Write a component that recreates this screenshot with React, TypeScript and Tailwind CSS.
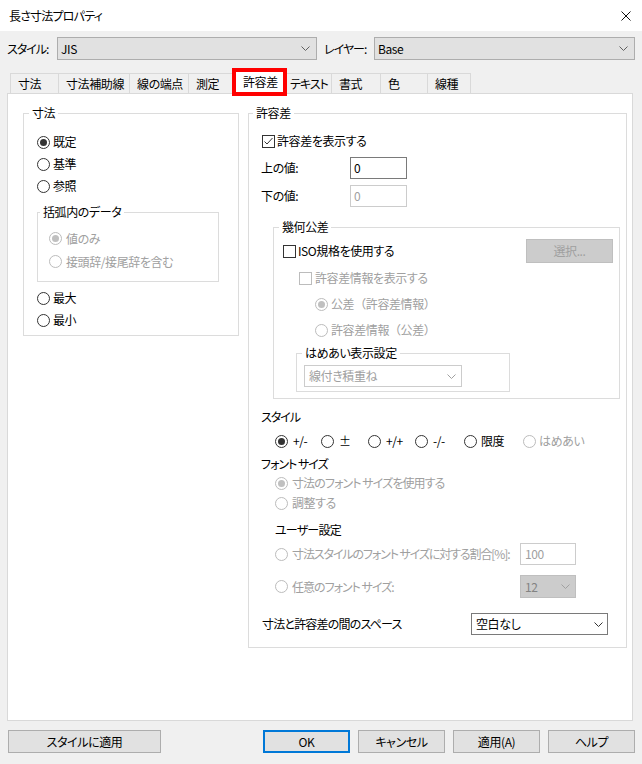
import React from "react";

const Chevron = ({ color = "#606060" }: { color?: string }) => (
  <svg width="9" height="5" viewBox="0 0 9 5" className="shrink-0">
    <polyline points="0.5,0.5 4.5,4.5 8.5,0.5" fill="none" stroke={color} strokeWidth="1" />
  </svg>
);

function Radio({ checked, disabled }: { checked?: boolean; disabled?: boolean }) {
  return (
    <span
      className={`w-[13px] h-[13px] rounded-full border bg-white flex items-center justify-center shrink-0 ${
        disabled ? "border-[#bcbcbc]" : "border-[#333333]"
      }`}
    >
      {checked && (
        <span className={`w-[7px] h-[7px] rounded-full ${disabled ? "bg-[#c0c0c0]" : "bg-[#333333]"}`} />
      )}
    </span>
  );
}

function Check({ checked, disabled }: { checked?: boolean; disabled?: boolean }) {
  return (
    <span
      className={`w-[13px] h-[13px] border bg-white flex items-center justify-center shrink-0 ${
        disabled ? "border-[#bcbcbc]" : "border-[#333333]"
      }`}
    >
      {checked && (
        <svg width="11" height="11" viewBox="0 0 11 11">
          <polyline points="1.5,5.5 4,8 9.5,2" fill="none" stroke="#333333" strokeWidth="1" />
        </svg>
      )}
    </span>
  );
}

function Group({
  label,
  className = "",
  legendClass = "",
  children,
}: {
  label: string;
  className?: string;
  legendClass?: string;
  children: React.ReactNode;
}) {
  return (
    <fieldset className={`border border-[#dcdcdc] min-w-0 ${className}`}>
      <legend className={`px-[3px] leading-[16px] ${legendClass}`}>{label}</legend>
      {children}
    </fieldset>
  );
}

const Tab = ({
  label,
  w,
  last,
  noLeft,
  pl = "pl-[7px]",
  extra = "",
}: {
  label: string;
  w: string;
  last?: boolean;
  noLeft?: boolean;
  pl?: string;
  extra?: string;
}) => (
  <div
    className={`h-[20px] ${w} ${pl} ${extra} whitespace-nowrap overflow-hidden flex items-center border-t border-[#d9d9d9] bg-[#f0f0f0] ${
      noLeft ? "" : "border-l"
    } ${last ? "border-r" : ""}`}
  >
    {label}
  </div>
);

const Btn = ({ label, w, primary }: { label: string; w: string; primary?: boolean }) => (
  <div
    className={`${w} h-[23px] flex items-center justify-center bg-[#e1e1e1] ${
      primary ? "border-2 border-[#0078d7]" : "border border-[#adadad]"
    }`}
  >
    {label}
  </div>
);

export default function App() {
  return (
    <div className="w-[642px] h-[764px] bg-[#f0f0f0] flex flex-col text-[12px] leading-[16px] tracking-[-0.4px] text-black overflow-hidden [font-family:'Noto_Sans_CJK_JP','Noto_Sans',sans-serif] [font-feature-settings:'palt']">
      {/* Title bar */}
      <div className="h-[31px] shrink-0 bg-white flex items-center justify-between pl-[9px] pr-[11px]">
        <span className="tracking-[-0.8px]">長さ寸法プロパティ</span>
        <svg width="10" height="10" viewBox="0 0 10 10">
          <line x1="0.5" y1="0.5" x2="9.5" y2="9.5" stroke="#111" strokeWidth="1" />
          <line x1="9.5" y1="0.5" x2="0.5" y2="9.5" stroke="#111" strokeWidth="1" />
        </svg>
      </div>

      {/* Style / layer row */}
      <div className="mt-[6px] h-[23px] shrink-0 flex items-center pl-[7px]">
        <span className="w-[50px] tracking-[-1px]">スタイル:</span>
        <div className="w-[260px] h-[23px] bg-[#e1e1e1] border border-[#adadad] flex items-center justify-between pl-[3px] pr-[6px]">
          <span>JIS</span>
          <Chevron />
        </div>
        <span className="ml-[7px] w-[50px] tracking-[-1px]">レイヤー:</span>
        <div className="w-[261px] h-[23px] bg-[#e1e1e1] border border-[#adadad] flex items-center justify-between pl-[3px] pr-[6px]">
          <span>Base</span>
          <Chevron />
        </div>
      </div>

      {/* Tabs */}
      <div className="mt-[8px] h-[25px] shrink-0 flex items-end pl-[10px]">
        <Tab label="寸法" w="w-[48px]" />
        <Tab label="寸法補助線" w="w-[71px]" />
        <Tab label="線の端点" w="w-[59px]" />
        <Tab label="測定" w="w-[44px]" />
        <div className="relative z-10 w-[55px] h-[28px] mb-[-3px] border-[4px] border-[#ff0000] bg-white flex items-center pl-[7px] whitespace-nowrap">
          許容差
        </div>
        <Tab label="テキスト" w="w-[44px]" noLeft pl="pl-[3px]" extra="tracking-[-1px]" />
        <Tab label="書式" w="w-[49px]" />
        <Tab label="色" w="w-[47px]" />
        <Tab label="線種" w="w-[44px]" last />
      </div>

      {/* Panel */}
      <div className="ml-[7px] w-[626px] h-[628px] shrink-0 border border-[#d9d9d9] bg-white flex items-start pl-[15px] pt-[11px]">
        {/* Left group */}
        <Group label="寸法" className="w-[216px]" legendClass="ml-[5px]">
          <div className="pt-[10px] pl-[13px] pb-[4px]">
            <div className="h-[22px] flex items-center gap-[3px]">
              <Radio checked />
              <span>既定</span>
            </div>
            <div className="h-[22px] flex items-center gap-[3px]">
              <Radio />
              <span>基準</span>
            </div>
            <div className="h-[22px] flex items-center gap-[3px]">
              <Radio />
              <span>参照</span>
            </div>
            <Group label="括弧内のデータ" className="mt-[7px] w-[182px]" legendClass="ml-[2px]">
              <div className="pt-[7px] pl-[11px] pb-[8px] text-[#a0a0a0]">
                <div className="h-[23px] flex items-center gap-[4px]">
                  <Radio checked disabled />
                  <span>値のみ</span>
                </div>
                <div className="h-[23px] flex items-center gap-[4px]">
                  <Radio disabled />
                  <span>接頭辞/接尾辞を含む</span>
                </div>
              </div>
            </Group>
            <div className="mt-[5px] h-[22px] flex items-center gap-[3px]">
              <Radio />
              <span>最大</span>
            </div>
            <div className="h-[22px] flex items-center gap-[3px]">
              <Radio />
              <span>最小</span>
            </div>
          </div>
        </Group>

        {/* Right group */}
        <Group label="許容差" className="ml-[9px] w-[379px]" legendClass="ml-[4px]">
          <div className="pt-[9px] pb-[12px]">
            <div className="ml-[13px] h-[22px] flex items-center gap-[2px]">
              <Check checked />
              <span>許容差を表示する</span>
            </div>
            <div className="mt-[5px] h-[22px] flex items-center pl-[12px]">
              <span className="w-[89px]">上の値:</span>
              <div className="w-[57px] h-[22px] border border-[#7a7a7a] bg-white flex items-center pl-[3px]">0</div>
            </div>
            <div className="mt-[6px] h-[22px] flex items-center pl-[12px]">
              <span className="w-[89px]">下の値:</span>
              <div className="w-[57px] h-[22px] border border-[#cccccc] bg-white flex items-center pl-[3px] text-[#a0a0a0]">
                0
              </div>
            </div>

            <Group label="幾何公差" className="mt-[12px] ml-[24px] w-[347px]" legendClass="ml-[5px]">
              <div className="pt-[4px] pl-[9px] pr-[6px] pb-[6px]">
                <div className="h-[24px] flex items-center">
                  <Check />
                  <span className="ml-[2px]">ISO規格を使用する</span>
                  <div className="ml-auto w-[87px] h-[24px] bg-[#cccccc] border border-[#bfbfbf] flex items-center justify-center text-[#a0a0a0]">
                    選択...
                  </div>
                </div>
                <div className="mt-[2px] h-[26px] flex items-center gap-[3px] pl-[16px] text-[#a0a0a0]">
                  <Check disabled />
                  <span>許容差情報を表示する</span>
                </div>
                <div className="h-[26px] flex items-center gap-[3px] pl-[32px] text-[#a0a0a0]">
                  <Radio checked disabled />
                  <span className="[font-feature-settings:normal]">公差（許容差情報）</span>
                </div>
                <div className="h-[26px] flex items-center gap-[3px] pl-[32px] text-[#a0a0a0]">
                  <Radio disabled />
                  <span className="[font-feature-settings:normal]">許容差情報（公差）</span>
                </div>
                <Group label="はめあい表示設定" className="mt-[2px] ml-[13px] w-[214px]" legendClass="ml-[5px]">
                  <div className="pt-[4px] pl-[7px] pb-[4px]">
                    <div className="w-[158px] h-[22px] border border-[#cccccc] bg-white flex items-center justify-between pl-[4px] pr-[5px] text-[#a0a0a0]">
                      <span>線付き積重ね</span>
                      <Chevron color="#a0a0a0" />
                    </div>
                  </div>
                </Group>
              </div>
            </Group>

            <div className="mt-[10px] h-[16px] pl-[12px] flex items-center tracking-[-1px]">スタイル</div>
            <div className="mt-[5px] h-[22px] pl-[26px] flex items-center">
              <div className="w-[46px] flex items-center gap-[5px]">
                <Radio checked />
                <span>+/-</span>
              </div>
              <div className="w-[47px] flex items-center gap-[5px]">
                <Radio />
                <span>±</span>
              </div>
              <div className="w-[47px] flex items-center gap-[5px]">
                <Radio />
                <span>+/+</span>
              </div>
              <div className="w-[49px] flex items-center gap-[5px]">
                <Radio />
                <span>-/-</span>
              </div>
              <div className="w-[59px] flex items-center gap-[4px]">
                <Radio />
                <span>限度</span>
              </div>
              <div className="flex items-center gap-[3px] text-[#a0a0a0]">
                <Radio disabled />
                <span>はめあい</span>
              </div>
            </div>

            <div className="mt-[4px] h-[16px] pl-[12px] flex items-center tracking-[-1px]">フォント サイズ</div>
            <div className="mt-[1px] h-[20px] pl-[26px] flex items-center gap-[4px] text-[#a0a0a0]">
              <Radio checked disabled />
              <span className="tracking-[-0.9px]">寸法のフォント サイズを使用する</span>
            </div>
            <div className="h-[20px] pl-[26px] flex items-center gap-[4px] text-[#a0a0a0]">
              <Radio disabled />
              <span>調整する</span>
            </div>

            <div className="mt-[9px] h-[16px] pl-[26px] flex items-center tracking-[-0.8px]">ユーザー設定</div>
            <div className="mt-[5px] h-[22px] pl-[26px] flex items-center text-[#a0a0a0]">
              <div className="w-[245px] flex items-center gap-[4px]">
                <Radio disabled />
                <span className="whitespace-nowrap tracking-[-1.1px]">寸法スタイルのフォント サイズに対する割合[%]:</span>
              </div>
              <div className="w-[56px] h-[22px] border border-[#cccccc] bg-white flex items-center pl-[4px]">100</div>
            </div>
            <div className="mt-[10px] h-[23px] pl-[26px] flex items-center text-[#a0a0a0]">
              <div className="w-[245px] flex items-center gap-[4px]">
                <Radio disabled />
                <span className="tracking-[-1px]">任意のフォント サイズ:</span>
              </div>
              <div className="w-[56px] h-[23px] border border-[#bfbfbf] bg-[#cccccc] flex items-center justify-between pl-[4px] pr-[5px] text-[#838383]">
                <span>12</span>
                <Chevron color="#a0a0a0" />
              </div>
            </div>

            <div className="mt-[15px] h-[22px] pl-[13px] flex items-center">
              <span className="w-[209px] tracking-[-0.8px]">寸法と許容差の間のスペース</span>
              <div className="w-[137px] h-[22px] border border-[#7a7a7a] bg-white flex items-center justify-between pl-[4px] pr-[4px]">
                <span>空白なし</span>
                <Chevron color="#333333" />
              </div>
            </div>
          </div>
        </Group>
      </div>

      {/* Bottom buttons */}
      <div className="mt-[9px] h-[23px] shrink-0 flex items-center pl-[8px] pr-[7px]">
        <Btn label="スタイルに適用" w="w-[153px]" />
        <div className="ml-auto flex gap-[8px]">
          <Btn label="OK" w="w-[87px]" primary />
          <Btn label="キャンセル" w="w-[87px]" />
          <Btn label="適用(A)" w="w-[87px]" />
          <Btn label="ヘルプ" w="w-[87px]" />
        </div>
      </div>
    </div>
  );
}
